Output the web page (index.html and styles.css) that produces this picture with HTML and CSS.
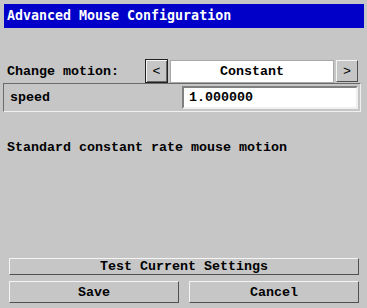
FILE: index.html
```html
<!DOCTYPE html>
<html lang="en">
<head>
  <meta charset="UTF-8">
  <title>Advanced Mouse Configuration</title>
  <link rel="stylesheet" href="styles.css">
</head>
<body>
  <div class="dialog">
    <div class="title">Advanced Mouse Configuration</div>

    <div class="motion-row">
      <span class="label">Change motion:</span>
      <button class="arrow focused">&lt;</button>
      <div class="choice">Constant</div>
      <button class="arrow">&gt;</button>
    </div>

    <div class="param-frame">
      <span class="param-name">speed</span>
      <input class="param-value" type="text" value="1.000000">
    </div>

    <p class="desc">Standard constant rate mouse motion</p>

    <div class="actions">
      <button class="btn">Test Current Settings</button>
      <div class="btn-row">
        <button class="btn">Save</button>
        <button class="btn">Cancel</button>
      </div>
    </div>
  </div>
</body>
</html>
```

FILE: styles.css
```css
* { box-sizing: border-box; }
html, body {
  margin: 0;
  height: 308px;
  overflow: hidden;
  background-color: #c6c6c6;
}
body, button, input {
  font-family: "Liberation Mono", "DejaVu Sans Mono", monospace;
  font-size: 13.33px;
  font-weight: bold;
  color: #000;
}
.dialog {
  display: flex;
  flex-direction: column;
  height: 308px;
}
.title {
  margin: 4px 3px 0 4px;
  height: 24px;
  line-height: 24px;
  padding-left: 3px;
  background-color: #0000c8;
  color: #fff;
  font-family: "DejaVu Sans Mono", monospace;
  font-size: 13.3px;
}
.motion-row {
  display: flex;
  align-items: center;
  margin-top: 31px;
  height: 24px;
  padding-left: 7px;
}
.label {
  width: 138px;
}
.arrow {
  width: 22px;
  height: 22px;
  padding: 0;
  background-color: #c6c6c6;
  border: 1px solid;
  border-color: #f4f4f4 #505050 #505050 #f4f4f4;
  font-weight: normal;
}
.arrow.focused {
  width: 23px;
  height: 24px;
  border: 1px solid #222;
  box-shadow: inset 1px 1px 0 #f4f4f4, inset -1px -1px 0 #666;
}
.choice {
  width: 164px;
  height: 23px;
  margin: 0 2px;
  line-height: 21px;
  text-align: center;
  background-color: #fff;
  border: 1px solid #a8a8a8;
}
.param-frame {
  display: flex;
  align-items: center;
  justify-content: space-between;
  margin: 0 6px 0 3px;
  height: 29px;
  padding: 0 2px 0 6px;
  border: 1px solid;
  border-color: #6a6a6a #f0f0f0 #f0f0f0 #6a6a6a;
}
.param-value {
  width: 176px;
  height: 23px;
  padding: 0 0 0 5px;
  background-color: #fff;
  border: 2px solid;
  border-color: #808080 #f0f0f0 #f0f0f0 #808080;
  outline: none;
}
.desc {
  margin: 28px 0 0;
  padding-left: 7px;
  line-height: 16px;
}
.actions {
  margin-top: auto;
  padding: 0 8px 5px 9px;
  display: flex;
  flex-direction: column;
  gap: 6px;
}
.btn-row {
  display: flex;
  gap: 10px;
}
.btn {
  flex: 1;
  height: 22px;
  padding: 0;
  background-color: #c6c6c6;
  border: 1px solid;
  border-color: #f4f4f4 #505050 #505050 #f4f4f4;
}
```
